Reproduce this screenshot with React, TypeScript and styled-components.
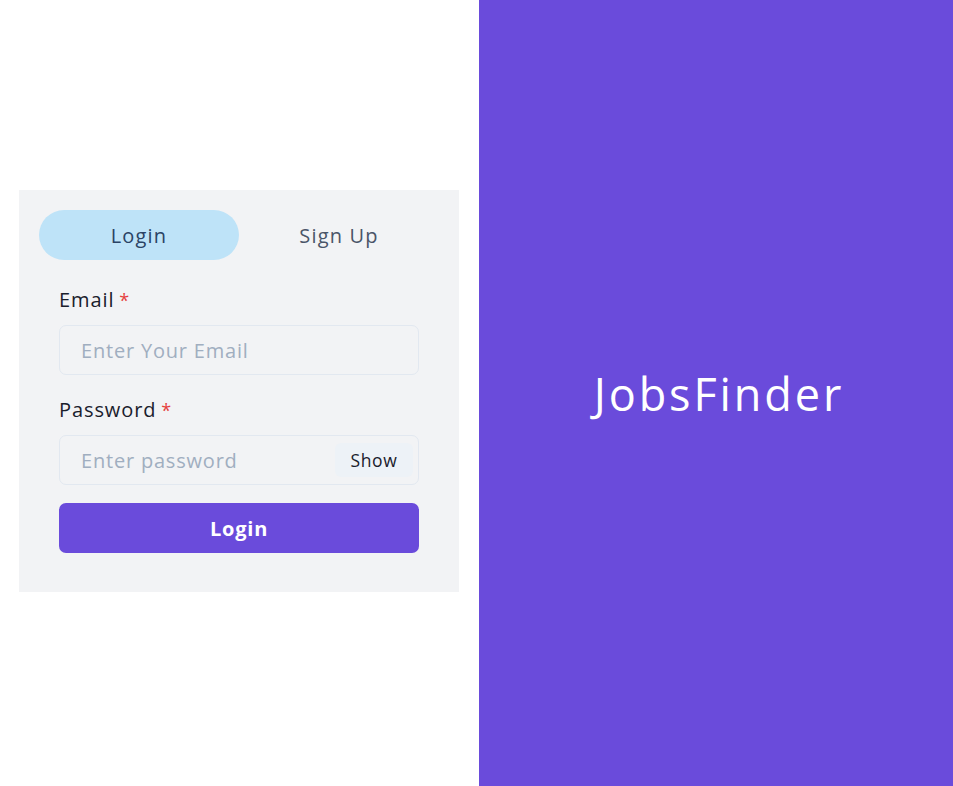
import React from "react";
import styled, { createGlobalStyle } from "styled-components";

const Global = createGlobalStyle`
  html, body { margin: 0; padding: 0; }
  body { font-family: "Open Sans", "Noto Sans", sans-serif; background: #fff; }
  * { box-sizing: border-box; }
`;

const Page = styled.div`
  display: flex;
  width: 100%;
  height: 786px;
`;

const LeftPane = styled.div`
  width: 479px;
  flex: none;
  display: flex;
  align-items: center;
  justify-content: center;
  padding: 0 20px 4px 19px;
`;

const Card = styled.div`
  width: 440px;
  background: #f2f3f5;
  padding: 20px 20px 39px;
`;

const Tabs = styled.div`
  display: flex;
  margin-bottom: 23px;
`;

const Tab = styled.button<{ $active?: boolean }>`
  flex: 1;
  height: 50px;
  border: none;
  border-radius: 25px;
  background: ${(p) => (p.$active ? "#bee3f8" : "transparent")};
  color: ${(p) => (p.$active ? "#2a4365" : "#4a5568")};
  font-family: inherit;
  font-size: 20px;
  font-weight: 500;
  letter-spacing: 1.2px;
  cursor: pointer;
`;

const Form = styled.div`
  padding: 0 20px;
  display: flex;
  flex-direction: column;
`;

const Field = styled.div`
  display: flex;
  flex-direction: column;
  margin-bottom: 18px;
`;

const Label = styled.label`
  font-size: 20px;
  color: #1a202c;
  padding-top: 2px;
  margin-bottom: 10px;
  line-height: 30px;
  letter-spacing: 0.9px;
`;

const Req = styled.span`
  color: #e53e3e;
  margin-left: 5px;
  font-size: 18px;
`;

const InputWrap = styled.div`
  height: 50px;
  border: 1px solid #e2e8f0;
  border-radius: 7px;
  display: flex;
  align-items: center;
  padding: 0 5px 0 21px;
`;

const Input = styled.input`
  flex: 1;
  min-width: 0;
  border: none;
  background: transparent;
  font-family: inherit;
  font-size: 20px;
  letter-spacing: 0.8px;
  color: #1a202c;
  outline: none;
  padding: 0;
  &::placeholder { color: #a0aec0; }
`;

const ShowButton = styled.button`
  flex: none;
  width: 78px;
  height: 34px;
  border: none;
  border-radius: 6px;
  background: #edf2f7;
  color: #1a202c;
  font-family: inherit;
  font-size: 17.5px;
  font-weight: 500;
  letter-spacing: 0.6px;
`;

const Submit = styled.button`
  height: 50px;
  border: none;
  border-radius: 7px;
  background: #6a4bdb;
  color: #fff;
  font-family: inherit;
  font-size: 20px;
  font-weight: 700;
  letter-spacing: 0.8px;
`;

const RightPane = styled.div`
  flex: 1;
  background: #6a4bdb;
  display: flex;
  align-items: center;
  justify-content: center;
`;

const Brand = styled.h1`
  margin: 0 0 0 6px;
  color: #fff;
  font-size: 45px;
  font-weight: 400;
  letter-spacing: 2.9px;
`;

export default function App() {
  return (
    <>
      <Global />
      <Page>
        <LeftPane>
          <Card>
            <Tabs>
              <Tab $active>Login</Tab>
              <Tab>Sign Up</Tab>
            </Tabs>
            <Form>
              <Field>
                <Label>
                  Email<Req>*</Req>
                </Label>
                <InputWrap>
                  <Input placeholder="Enter Your Email" />
                </InputWrap>
              </Field>
              <Field>
                <Label>
                  Password<Req>*</Req>
                </Label>
                <InputWrap>
                  <Input type="password" placeholder="Enter password" />
                  <ShowButton>Show</ShowButton>
                </InputWrap>
              </Field>
              <Submit>Login</Submit>
            </Form>
          </Card>
        </LeftPane>
        <RightPane>
          <Brand>JobsFinder</Brand>
        </RightPane>
      </Page>
    </>
  );
}
